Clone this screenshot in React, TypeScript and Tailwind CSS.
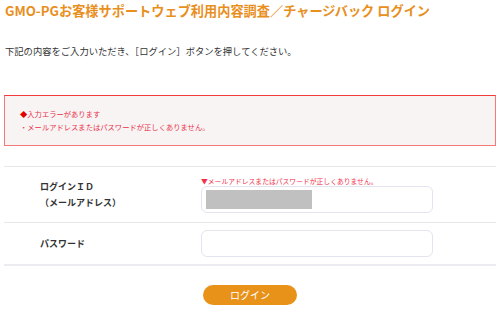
const font = { fontFamily: '"Noto Sans CJK JP", "Noto Sans", sans-serif' };

export default function App() {
  return (
    <div className="w-[500px] h-[315px] bg-white px-[4px] overflow-hidden" style={font}>
      <h1 className="pt-[2px] pl-[1px] text-[13.2px] leading-[18px] font-bold text-[#e88f1e]">
        GMO-PGお客様サポートウェブ利用内容調査／チャージバック ログイン
      </h1>

      <p className="mt-[24px] pl-[1px] text-[9.3px] leading-[14px] text-[#333]">
        下記の内容をご入力いただき、［ログイン］ボタンを押してください。
      </p>

      <div className="mt-[37px] h-[51px] border border-[#f47a7a] border-t-[#f23a3a] bg-[#f8f4f4] pl-[15px] pt-[12px]">
        <p className="text-[7.3px] leading-[13px] text-[#e8304a]">
          <span className="text-[#e00000]">◆</span>入力エラーがあります
        </p>
        <p className="text-[7.3px] leading-[13px] text-[#e8304a]">・メールアドレスまたはパスワードが正しくありません。</p>
      </div>

      <div className="mt-[20px] border-t border-[#e8e8ec]">
        <div className="flex items-center pt-[9px] pb-[9px] border-b border-[#e8e8ec]">
          <div className="w-[197px] pl-[36px] text-[9px] leading-[16px] font-bold text-[#333]">
            <div>ログインＩＤ</div>
            <div>（メールアドレス）</div>
          </div>
          <div>
            <div className="text-[6.8px] leading-[10px] text-[#f0304a]">▼メールアドレスまたはパスワードが正しくありません。</div>
            <div className="w-[232px] h-[27px] rounded-[6px] border border-[#e2e5f0] bg-white pl-[4px] pt-[3px]">
              <div className="w-[106px] h-[19px] bg-[#c0c0c0]" />
            </div>
          </div>
        </div>
        <div className="flex items-center pt-[7px] pb-[7px] border-b-2 border-[#ececf0]">
          <div className="w-[197px] pl-[36px] text-[9px] leading-[16px] font-bold text-[#333]">パスワード</div>
          <div className="w-[232px] h-[27px] rounded-[6px] border border-[#e2e5f0] bg-white" />
        </div>
      </div>

      <div className="flex justify-center mt-[19px]">
        <button className="w-[94px] h-[20px] rounded-full bg-[#e8921a] text-white text-[10px] leading-[20px]">
          ログイン
        </button>
      </div>
    </div>
  );
}
